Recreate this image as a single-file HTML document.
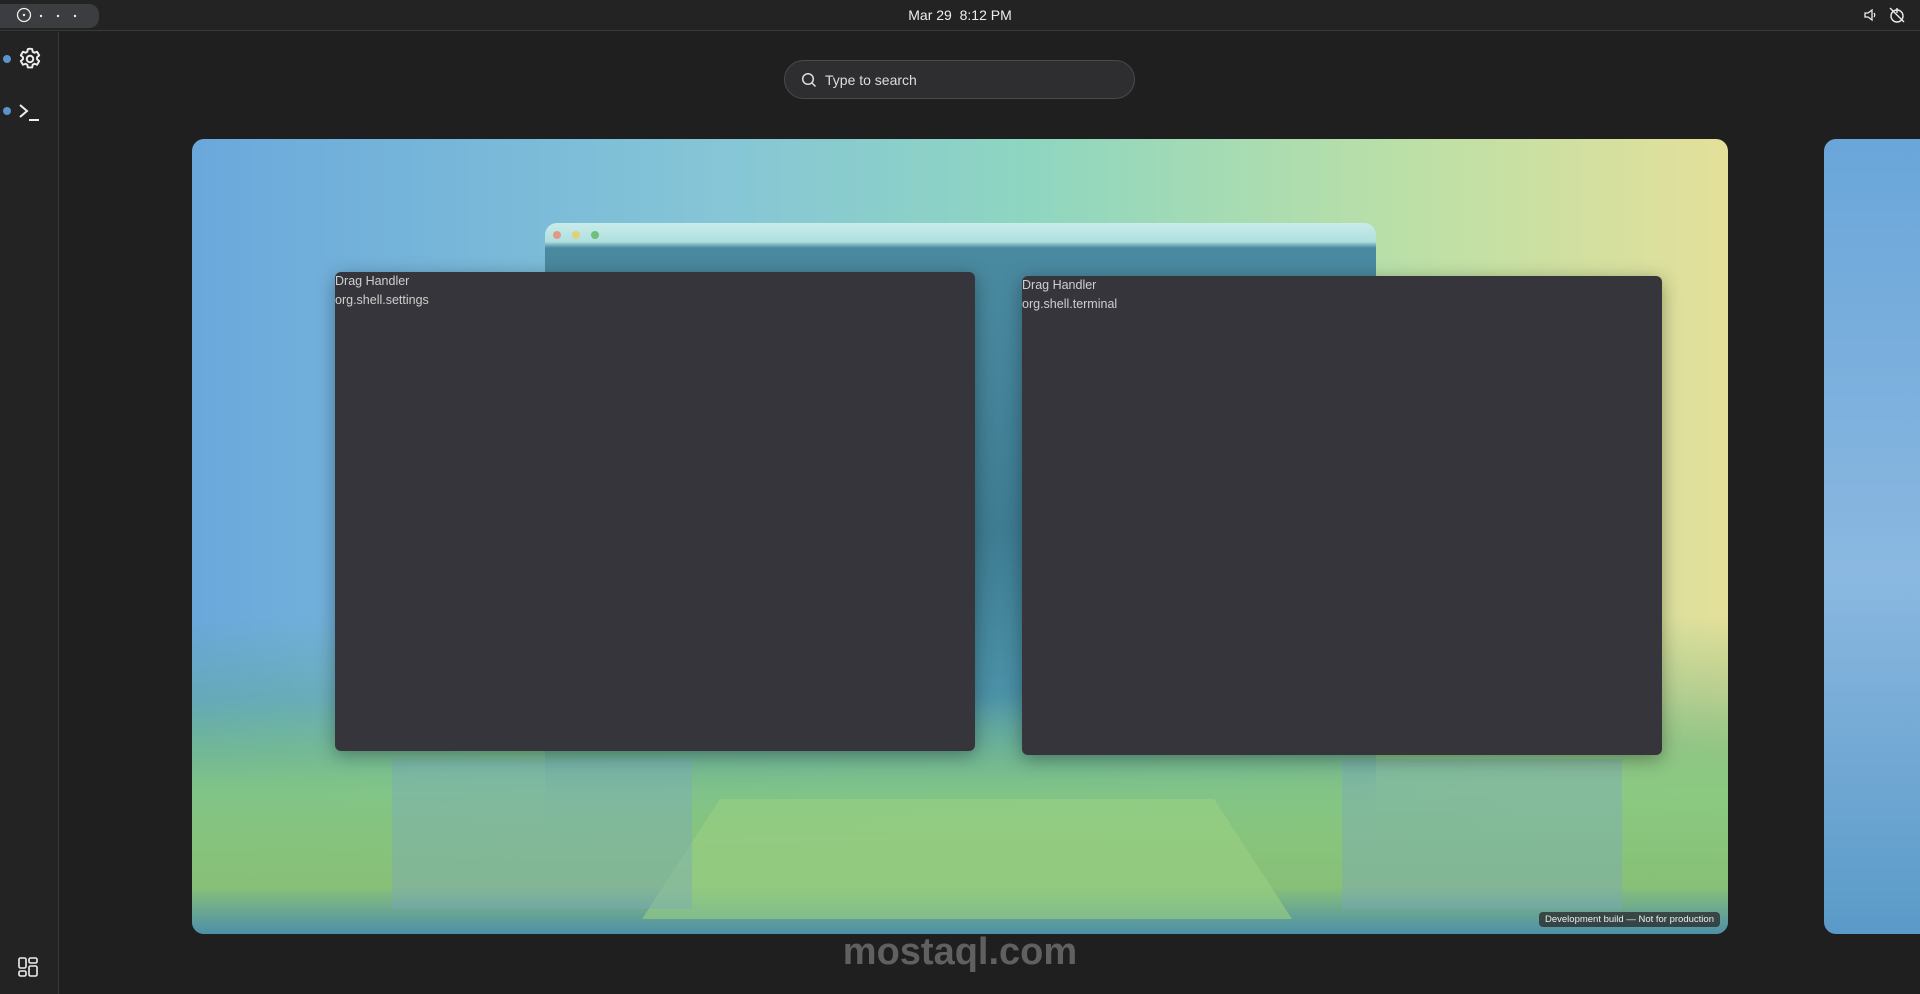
<!DOCTYPE html>
<html><head><meta charset="utf-8"><style>
*{margin:0;padding:0;box-sizing:border-box}
body{width:1920px;height:994px;background:#1f1f1f;position:relative;overflow:hidden;font-family:"Liberation Sans",sans-serif}
.top{position:absolute;left:0;top:0;width:1920px;height:31px;background:#232323;border-bottom:1px solid #3a3a3a}
.pill{position:absolute;left:0;top:4px;width:99px;height:24px;background:#3b3d40;border-radius:0 10px 10px 0}
.clock{position:absolute;left:0;width:1920px;top:7px;text-align:center;color:#eee;font-size:14px}
.side{position:absolute;left:0;top:32px;width:59px;height:962px;background:#232323;border-right:1px solid #3a3a3a}
.dot{position:absolute;left:3px;width:8px;height:8px;border-radius:50%;background:#5b94cc}
.search{position:absolute;left:784px;top:60px;width:351px;height:39px;border:1px solid #4a4a4e;border-radius:20px;background:#2e2e31;color:#ddd;font-size:14px;padding:11px 0 0 40px}
.card{position:absolute;left:192px;top:139px;width:1536px;height:795px;border-radius:12px;overflow:hidden;
background:linear-gradient(180deg,rgba(0,0,0,0) 0%,rgba(0,0,0,0) 60%,rgba(90,170,120,.6) 78%,rgba(120,190,110,.9) 92%,#4c8ca8 100%),
linear-gradient(90deg,#6aa8dc 0%,#86c6d6 35%,#8fd6c0 55%,#bde0a6 80%,#e4e09a 100%)}
.win{position:absolute;background:#36353b;border-radius:6px;box-shadow:0 4px 18px rgba(0,0,0,.35);color:#cfcfcf;font-size:12.5px;line-height:19px}
.next{position:absolute;left:1824px;top:139px;width:200px;height:795px;border-radius:12px;background:linear-gradient(180deg,#6aa6da,#8ab8e0 55%,#5a9ac8)}
.dev{position:absolute;left:1539px;top:912px;background:rgba(40,40,40,.75);color:#eee;font-size:9.5px;padding:2px 6px;border-radius:4px}
.wm{position:absolute;left:0;width:1920px;top:931px;text-align:center;color:rgba(150,150,150,.55);font-size:38px;font-weight:bold}
</style></head><body>
<div class="top">
 <div class="pill">
  <svg width="99" height="24" style="position:absolute;left:0;top:0"><circle cx="24" cy="11" r="6.5" fill="none" stroke="#eee" stroke-width="1.3"/><circle cx="24" cy="11" r="1.2" fill="#eee"/><circle cx="41" cy="12" r="1.2" fill="#eee"/><circle cx="58" cy="12" r="1.2" fill="#eee"/><circle cx="75" cy="12" r="1.2" fill="#eee"/></svg>
 </div>
 <div class="clock">Mar 29&nbsp;&nbsp;8:12 PM</div>
 <svg style="position:absolute;left:1862px;top:7px" width="16" height="16"><path d="M3 6h3l4-3v10l-4-3H3z" fill="none" stroke="#eee" stroke-width="1.3"/><path d="M12 6q1.5 2 0 4" fill="none" stroke="#eee" stroke-width="1.2"/></svg>
 <svg style="position:absolute;left:1888px;top:6px" width="18" height="18"><circle cx="9" cy="10" r="6" fill="none" stroke="#eee" stroke-width="1.4"/><path d="M9 2v5M2 2l14 14" stroke="#eee" stroke-width="1.4"/></svg>
</div>
<div class="side">
 <div class="dot" style="top:23px"></div>
 <svg style="position:absolute;left:17px;top:14px" width="26" height="26" viewBox="0 0 24 24"><path d="M12 2.5l2 .3.5 2.5 1.6.9 2.4-.9 2 3.4-2 1.7v1.8l2 1.700-2 3.4-2.4-.9-1.6.9-.5 2.5h-4l-.5-2.5-1.6-.9-2.4.9-2-3.4 2-1.7v-1.8l-2-1.7 2-3.4 2.4.9 1.6-.9.5-2.5z" fill="none" stroke="#eee" stroke-width="1.8" stroke-linejoin="round"/><circle cx="12" cy="12" r="3" fill="none" stroke="#eee" stroke-width="1.8"/></svg>
 <div class="dot" style="top:75px"></div>
 <svg style="position:absolute;left:18px;top:70px" width="24" height="22"><path d="M2 3l7 6-7 6" fill="none" stroke="#eee" stroke-width="2"/><path d="M11 18h10" stroke="#eee" stroke-width="2"/></svg>
 <svg style="position:absolute;left:17px;top:924px" width="24" height="24"><rect x="2" y="2" width="7" height="10" rx="1.5" fill="none" stroke="#eee" stroke-width="1.6"/><rect x="12" y="2" width="8" height="5" rx="1.5" fill="none" stroke="#eee" stroke-width="1.6"/><rect x="2" y="15" width="7" height="5" rx="1.5" fill="none" stroke="#eee" stroke-width="1.6"/><rect x="12" y="10" width="8" height="10" rx="1.5" fill="none" stroke="#eee" stroke-width="1.6"/></svg>
</div>
<div class="search"><svg style="position:absolute;left:16px;top:11px" width="16" height="16"><circle cx="7" cy="7" r="5.3" fill="none" stroke="#ddd" stroke-width="1.5"/><path d="M11 11l3.5 3.5" stroke="#ddd" stroke-width="1.5"/></svg>Type to search</div>
<div class="card">
 <div style="position:absolute;left:353px;top:84px;width:831px;height:620px;border-radius:12px;background:linear-gradient(180deg,#c8ecea 0,#b0e0e0 3%,#4a8aa0 4%,#3e7c92 50%,#4a90a6 75%,rgba(90,160,176,0) 100%)"></div>
 <div style="position:absolute;left:361px;top:92px;width:8px;height:8px;border-radius:50%;background:#e09a8a"></div>
 <div style="position:absolute;left:380px;top:92px;width:8px;height:8px;border-radius:50%;background:#e0d07a"></div>
 <div style="position:absolute;left:399px;top:92px;width:8px;height:8px;border-radius:50%;background:#6fc07a"></div>
 <div style="position:absolute;left:0;top:560px;width:1536px;height:235px;background:linear-gradient(180deg,rgba(140,200,150,.0),rgba(140,205,130,.7) 40%,#88c078 80%,#4e8fa8 100%)"></div>
 <div style="position:absolute;left:450px;top:660px;width:650px;height:120px;background:#9ad084;opacity:.6;clip-path:polygon(12% 0,88% 0,100% 100%,0 100%)"></div>
 <div style="position:absolute;left:200px;top:620px;width:300px;height:150px;background:#7aa8c0;opacity:.4"></div>
 <div style="position:absolute;left:1150px;top:620px;width:280px;height:150px;background:#7aa8c0;opacity:.4"></div>
 <div style="position:absolute;left:780px;top:680px;width:20px;height:20px"></div>
</div>
<div class="next"></div>
<div class="win" style="left:335px;top:272px;width:640px;height:479px">Drag Handler<br>org.shell.settings</div>
<div class="win" style="left:1022px;top:276px;width:640px;height:479px">Drag Handler<br>org.shell.terminal</div>
<div class="dev">Development build — Not for production</div>
<div class="wm">mostaql.com</div>
</body></html>
